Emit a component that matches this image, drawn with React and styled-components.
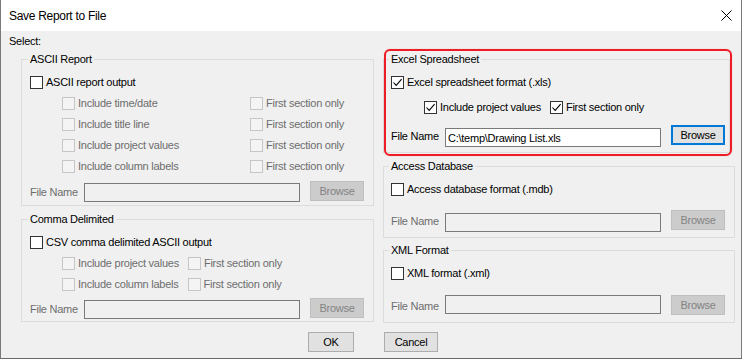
import React from 'react';
import styled, { createGlobalStyle } from 'styled-components';

const GlobalStyle = createGlobalStyle`
  html, body {
    margin: 0;
    padding: 0;
    background: #ffffff;
  }
  body {
    font-family: "Liberation Sans", Arial, sans-serif;
    font-size: 11px;
    letter-spacing: -0.25px;
    color: #000;
  }
  * { box-sizing: border-box; }
`

const Window = styled.div`
  width: 742px;
  height: 359px;
  background: #f0f0f0;
  border-left: 1px solid #7a7a7a;
  border-right: 1px solid #7a7a7a;
  border-bottom: 1px solid #6a6a6a;
  display: flex;
  flex-direction: column;
`

const TitleBar = styled.div`
  height: 31px;
  flex: none;
  background: #ffffff;
  display: flex;
  align-items: center;
  padding: 0 9px 0 8px;
  font-size: 12px;
  letter-spacing: -0.3px;
  svg { margin-left: auto; }
`

const Client = styled.div`
  padding: 4px 8px 0 8px;
  line-height: 13px;
`

const Columns = styled.div`
  display: grid;
  grid-template-columns: 353px 352px;
  column-gap: 9px;
  margin: 11px 0 0 12px;
  align-items: start;
`

const Column = styled.div`
  display: flex;
  flex-direction: column;
`

const Group = styled.div`
  position: relative;
  width: ${p => p.$width || '100%'};
  border: 1px solid #dcdcdc;
  margin-top: ${p => p.$gap || 0}px;
  padding: ${p => p.$pad || '12px 0 4px 8px'};
`

const Caption = styled.span`
  position: absolute;
  top: -7px;
  left: ${p => p.$left || 6}px;
  padding: 0 2px;
  background: #f0f0f0;
`

const Highlight = styled.div`
  position: absolute;
  top: -11px;
  left: 0;
  right: -3px;
  bottom: -4px;
  border: 2px solid #ee1c24;
  border-radius: 6px;
  box-shadow: 0 0 1px rgba(238, 28, 36, 0.45);
  pointer-events: none;
`

const Row = styled.div`
  display: flex;
  align-items: center;
  height: 21px;
  gap: 9px;
  padding-left: ${p => p.$indent || 0}px;
  margin-top: ${p => p.$gap || 0}px;
`

const Option = styled.label`
  display: flex;
  align-items: center;
  gap: 3px;
  width: ${p => (p.$width ? `${p.$width}px` : 'auto')};
  color: ${p => (p.$disabled ? '#6d6d6d' : '#000')};
  white-space: nowrap;
`

const Box = styled.span`
  width: 13px;
  height: 13px;
  flex: none;
  display: flex;
  align-items: center;
  justify-content: center;
  border: 1px solid ${p => (p.$disabled ? '#c6c6c6' : '#333333')};
  background: ${p => (p.$disabled ? '#f4f4f4' : '#ffffff')};
`

const FileRow = styled.div`
  display: flex;
  align-items: flex-start;
  height: 20px;
  margin-top: ${p => p.$gap || 0}px;
`

const FileLabel = styled.span`
  width: 54px;
  flex: none;
  margin-top: 5px;
  color: ${p => (p.$disabled ? '#6d6d6d' : '#000')};
`

const TextBox = styled.input`
  width: 216px;
  height: 19px;
  flex: none;
  margin: ${p => p.$drop || 0}px 10px 0 0;
  padding: 0 2px;
  border: 1px solid #7a7a7a;
  background: ${p => (p.$disabled ? '#f0f0f0' : '#ffffff')};
  font: inherit;
  letter-spacing: inherit;
  color: #000;
  outline: none;
`

const Button = styled.button`
  width: ${p => p.$width || 54}px;
  height: 20px;
  flex: none;
  padding: 0;
  font: inherit;
  letter-spacing: inherit;
  color: ${p => (p.disabled ? '#838383' : '#000')};
  background: ${p => (p.disabled ? '#cccccc' : '#e1e1e1')};
  border: ${p => (p.$focused ? '2px solid #0078d7' : `1px solid ${p.disabled ? '#bfbfbf' : '#adadad'}`)};
`

const SelectLabel = styled.div``

const Actions = styled.div`
  display: flex;
  justify-content: center;
  gap: 30px;
  margin-top: 9px;
  padding-left: 4px;
`

const Check = () => (
  <svg width="11" height="11" viewBox="0 0 11 11">
    <path d="M1.5 5.5 L4.2 8.4 L9.6 2.2" fill="none" stroke="#000" strokeWidth="1.1" />
  </svg>
)

const CheckOption = ({ children, checked, disabled, width }) => (
  <Option $disabled={disabled} $width={width}>
    <Box $disabled={disabled}>{checked && <Check />}</Box>
    {children}
  </Option>
)

const FileField = ({ value, disabled, focused, drop, gap }) => (
  <FileRow $gap={gap}>
    <FileLabel $disabled={disabled}>File Name</FileLabel>
    <TextBox readOnly disabled={disabled} $disabled={disabled} $drop={drop} defaultValue={value || ''} />
    <Button disabled={disabled} $focused={focused}>Browse</Button>
  </FileRow>
)

const asciiRows = ['Include time/date', 'Include title line', 'Include project values', 'Include column labels']

const App = () => {
  return (
    <Window>
      <GlobalStyle />
      <TitleBar>
        Save Report to File
        <svg width="11" height="11" viewBox="0 0 11 11">
          <path d="M0.5 0.5 L10.5 10.5 M10.5 0.5 L0.5 10.5" stroke="#000" strokeWidth="1" />
        </svg>
      </TitleBar>
      <Client>
        <SelectLabel>Select:</SelectLabel>
        <Columns>
          <Column>
            <Group>
              <Caption>ASCII Report</Caption>
              <Row>
                <CheckOption>ASCII report output</CheckOption>
              </Row>
              {asciiRows.map(text => (
                <Row key={text} $indent={32}>
                  <CheckOption disabled width={179}>{text}</CheckOption>
                  <CheckOption disabled>First section only</CheckOption>
                </Row>
              ))}
              <FileField disabled drop={2} gap={4} />
            </Group>
            <Group $gap={13} $pad="12px 0 3px 8px">
              <Caption>Comma Delimited</Caption>
              <Row>
                <CheckOption>CSV comma delimited ASCII output</CheckOption>
              </Row>
              <Row $indent={32}>
                <CheckOption disabled>Include project values</CheckOption>
                <CheckOption disabled>First section only</CheckOption>
              </Row>
              <Row $indent={32}>
                <CheckOption disabled>Include column labels</CheckOption>
                <CheckOption disabled>First section only</CheckOption>
              </Row>
              <FileField disabled drop={2} gap={3} />
            </Group>
          </Column>
          <Column>
            <Group $width="347px" $pad="12px 0 7px 7px">
              <Highlight />
              <Caption $left={5}>Excel Spreadsheet</Caption>
              <Row>
                <CheckOption checked>Excel spreadsheet format (.xls)</CheckOption>
              </Row>
              <Row $indent={33} $gap={4}>
                <CheckOption checked>Include project values</CheckOption>
                <CheckOption checked>First section only</CheckOption>
              </Row>
              <FileField value={'C:\\temp\\Drawing List.xls'} focused drop={3} gap={7} />
            </Group>
            <Group $gap={13} $pad="12px 0 7px 7px">
              <Caption $left={5}>Access Database</Caption>
              <Row>
                <CheckOption>Access database format (.mdb)</CheckOption>
              </Row>
              <FileField disabled drop={3} gap={10} />
            </Group>
            <Group $gap={12} $pad="12px 0 7px 7px">
              <Caption $left={5}>XML Format</Caption>
              <Row>
                <CheckOption>XML format (.xml)</CheckOption>
              </Row>
              <FileField disabled gap={11} />
            </Group>
          </Column>
        </Columns>
        <Actions>
          <Button $width={46}>OK</Button>
          <Button $width={54}>Cancel</Button>
        </Actions>
      </Client>
    </Window>
  );
}

export default App;
